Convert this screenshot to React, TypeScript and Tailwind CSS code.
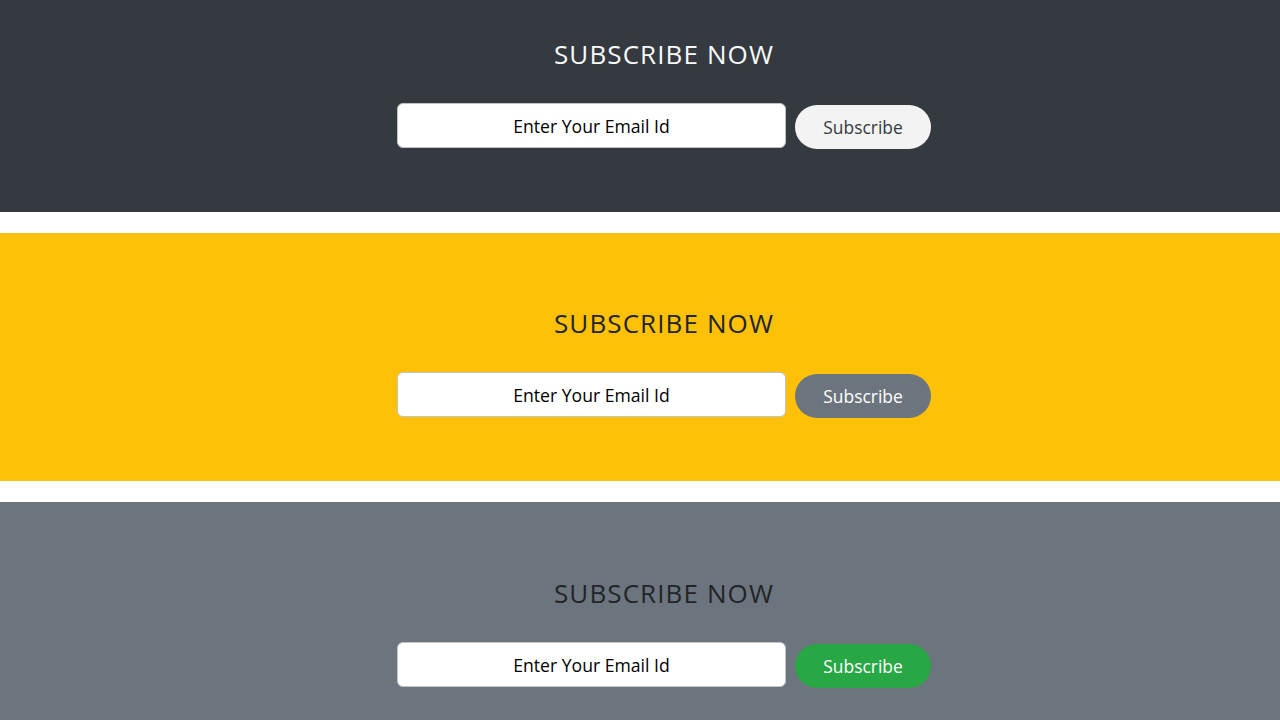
import React from "react";

type Variant = {
  section: string;
  heading: string;
  button: string;
};

// Three colour schemes of the same subscribe block
const variants: Variant[] = [
  {
    section: "bg-[#343a40] pt-[36px]",
    heading: "text-[#f8f9fa]",
    button: "bg-[#f3f3f3] text-[#343a40]",
  },
  {
    section: "bg-[#ffc107] pt-[72px]",
    heading: "text-[#212529]",
    button: "bg-[#6c757d] text-white",
  },
  {
    section: "bg-[#6c757d] pt-[73px]",
    heading: "text-[#212529]",
    button: "bg-[#28a745] text-white",
  },
];

function SubscribeBlock({ v }: { v: Variant }) {
  return (
    <section className={`${v.section} pb-[63px] pl-[48px]`}>
      <div className="flex flex-col items-center">
        <h2
          className={`${v.heading} text-[26px] leading-[36px] tracking-[1.1px] font-normal mb-[31px]`}
        >
          SUBSCRIBE NOW
        </h2>
        <div className="flex items-start gap-[9px]">
          <input
            type="email"
            placeholder="Enter Your Email Id"
            className="w-[389px] h-[45px] rounded-[6px] border border-[#bfc3c7] bg-white text-center text-[17.6px] text-black placeholder:text-black outline-none"
          />
          <button
            className={`${v.button} mt-[2px] w-[136px] h-[44px] rounded-full text-[17.4px] leading-none pt-[1px]`}
          >
            Subscribe
          </button>
        </div>
      </div>
    </section>
  );
}

export default function App() {
  return (
    <div
      className="min-h-screen bg-white flex flex-col gap-[21px]"
      style={{ fontFamily: '"Open Sans", "Noto Sans", sans-serif' }}
    >
      {variants.map((v, i) => (
        <SubscribeBlock key={i} v={v} />
      ))}
    </div>
  );
}
